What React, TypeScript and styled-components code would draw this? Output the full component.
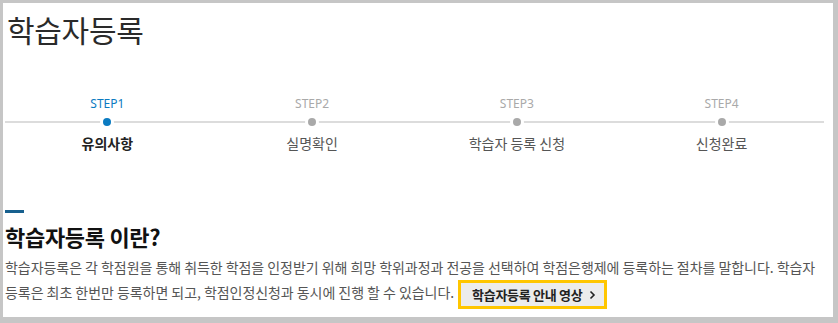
import React from "react";
import styled, { createGlobalStyle } from "styled-components";

const Global = createGlobalStyle`
  html, body { margin: 0; padding: 0; background: #c6c6c6; }
  body { font-family: "Noto Sans CJK KR", "Noto Sans", sans-serif; }
  * { box-sizing: border-box; }
`;

const Page = styled.div`
  margin: 3px 5px 6px 3px;
  height: 314px;
  background: #fff;
  padding: 0 9px 0 2px;
  overflow: hidden;
`;

const Title = styled.h1`
  margin: 0;
  padding: 6px 0 0 2px;
  font-size: 30px;
  line-height: 40px;
  font-weight: 400;
  color: #2a2a2a;
  letter-spacing: -0.3px;
`;

const Steps = styled.ol`
  list-style: none;
  margin: 46px 0 0 0;
  padding: 0;
  display: grid;
  grid-template-columns: repeat(4, 1fr);
  position: relative;
  &::before {
    content: "";
    position: absolute;
    left: 0;
    right: 0;
    top: 26px;
    height: 2px;
    background: #dcdcdc;
  }
`;

const Step = styled.li`
  display: flex;
  flex-direction: column;
  align-items: center;
  position: relative;
`;

const StepNo = styled.span<{ $active?: boolean }>`
  font-family: "Noto Sans", "Open Sans", sans-serif;
  font-size: 12px;
  line-height: 18px;
  color: ${(p) => (p.$active ? "#0b7bc1" : "#a9a9a9")};
`;

const Dot = styled.span<{ $active?: boolean }>`
  width: 8px;
  height: 8px;
  border-radius: 50%;
  margin-top: 5px;
  background: ${(p) => (p.$active ? "#0b7bc1" : "#a9a9a9")};
  position: relative;
  z-index: 1;
  box-shadow: 0 0 0 3px #fff;
`;

const StepName = styled.span<{ $active?: boolean }>`
  margin-top: 7px;
  font-size: 14px;
  line-height: 20px;
  font-weight: ${(p) => (p.$active ? 700 : 400)};
  color: ${(p) => (p.$active ? "#222" : "#555")};
`;

const Section = styled.section`
  margin-top: 57px;
  padding-left: 0;
`;

const Bar = styled.div`
  width: 19px;
  height: 3px;
  background: #17608e;
`;

const Heading = styled.h2`
  margin: 8px 0 0 0;
  font-size: 22px;
  line-height: 30px;
  font-weight: 700;
  color: #111;
  letter-spacing: -0.3px;
`;

const Text = styled.p`
  margin: 4px 0 0 0;
  font-size: 14px;
  line-height: 25px;
  color: #555;
  letter-spacing: -0.05px;
`;

const VideoButton = styled.button`
  display: inline-flex;
  align-items: center;
  gap: 7px;
  margin-left: 4px;
  height: 29px;
  padding: 0 8px 0 11px;
  border: 3px solid #ffc600;
  background: #ececec;
  font-family: "Noto Sans CJK KR", sans-serif;
  font-size: 13px;
  font-weight: 700;
  color: #222;
  letter-spacing: -0.3px;
  vertical-align: middle;
  cursor: pointer;
`;

const steps = [
  { no: "STEP1", name: "유의사항", active: true },
  { no: "STEP2", name: "실명확인" },
  { no: "STEP3", name: "학습자 등록 신청" },
  { no: "STEP4", name: "신청완료" },
];

export default function App() {
  return (
    <>
      <Global />
      <Page>
        <Title>학습자등록</Title>
        <Steps>
          {steps.map((s) => (
            <Step key={s.no}>
              <StepNo $active={s.active}>{s.no}</StepNo>
              <Dot $active={s.active} />
              <StepName $active={s.active}>{s.name}</StepName>
            </Step>
          ))}
        </Steps>
        <Section>
          <Bar />
          <Heading>학습자등록 이란?</Heading>
          <Text>
            학습자등록은 각 학점원을 통해 취득한 학점을 인정받기 위해 희망 학위과정과 전공을 선택하여 학점은행제에 등록하는 절차를 말합니다. 학습자 등록은 최초 한번만 등록하면 되고, 학점인정신청과 동시에 진행 할 수 있습니다.
            <VideoButton>
              학습자등록 안내 영상
              <svg width="7" height="10" viewBox="0 0 7 10">
                <path d="M1.5 1.5 L5 5 L1.5 8.5" fill="none" stroke="#222" strokeWidth="1.6" />
              </svg>
            </VideoButton>
          </Text>
        </Section>
      </Page>
    </>
  );
}
